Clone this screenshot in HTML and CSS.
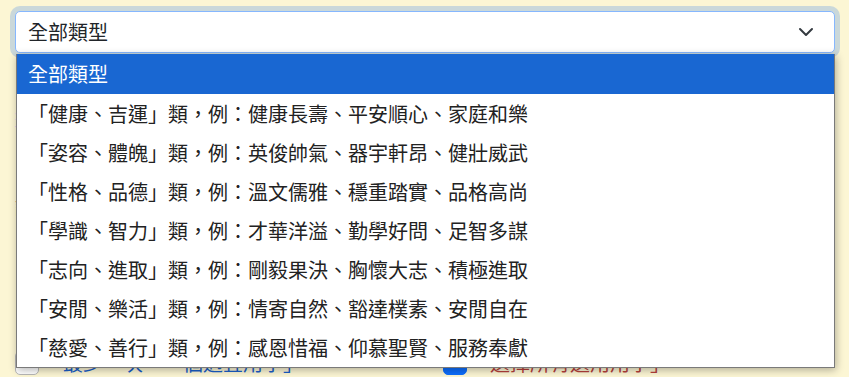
FILE: index.html
```html
<!DOCTYPE html>
<html lang="zh-Hant">
<head>
    <meta charset="UTF-8">
    <title>名字類型</title>
    <meta name="viewport" content="width=device-width, initial-scale=1.0">
    <link rel="stylesheet" href="styles.css">
</head>
<body>

    <div class="page">
        <div class="type-select">
            <div class="select-box">
                <span class="select-value">全部類型</span>
                <svg class="select-arrow" width="16" height="16" viewBox="0 0 16 16">
                    <path d="M2 5l6 6 6-6" fill="none" stroke="#343a40" stroke-width="2" stroke-linecap="round" stroke-linejoin="round"/>
                </svg>
            </div>

            <ul class="option-list">
                <li class="option selected">全部類型</li>
                <li class="option">「健康、吉運」類，例：健康長壽、平安順心、家庭和樂</li>
                <li class="option">「姿容、體魄」類，例：英俊帥氣、器宇軒昂、健壯威武</li>
                <li class="option">「性格、品德」類，例：溫文儒雅、穩重踏實、品格高尚</li>
                <li class="option">「學識、智力」類，例：才華洋溢、勤學好問、足智多謀</li>
                <li class="option">「志向、進取」類，例：剛毅果決、胸懷大志、積極進取</li>
                <li class="option">「安閒、樂活」類，例：情寄自然、豁達樸素、安閒自在</li>
                <li class="option">「慈愛、善行」類，例：感恩惜福、仰慕聖賢、服務奉獻</li>
            </ul>
        </div>

        <div class="filters">
            <p class="filter-link">選擇字數</p>
            <p class="filter-note">請選擇名字的字數及用字條件</p>
        </div>

        <div class="check-row">
            <label class="check-item">
                <span class="check-box"></span>
                <span class="check-text blue">最少一次「一個適宜用字」</span>
            </label>
            <label class="check-item">
                <span class="check-box checked"></span>
                <span class="check-text red">選擇所有選用用字」</span>
            </label>
        </div>
    </div>

</body>
</html>
```

FILE: styles.css
```css
html, body {
    height: 100%;
}

body {
    background-color: #fcf6d4;
    color: #212529;
    font-family: "Noto Sans CJK TC", "Noto Sans", sans-serif;
    margin: 0;
    padding: 0;
}

.page {
    display: flex;
    flex-direction: column;
    height: 377px;
    box-sizing: border-box;
    padding: 11px 14px 0 15px;
    overflow: hidden;
}

.type-select {
    position: relative;
    z-index: 10;
}

.select-box {
    display: flex;
    align-items: center;
    justify-content: space-between;
    height: 40px;
    padding: 0 20px 0 12px;
    background-color: #ffffff;
    border: 1px solid #86b7fe;
    border-radius: 5px;
    box-shadow: 0 0 0 5px rgba(110, 160, 230, 0.35);
    font-size: 20px;
    line-height: 1;
}

.select-value {
    color: #212529;
}

.select-arrow {
    display: block;
}

.option-list {
    position: absolute;
    top: 43px;
    left: 1px;
    right: 0;
    margin: 0;
    padding: 0;
    list-style: none;
    background-color: #ffffff;
    border: 1px solid #7a7a7a;
    border-top: none;
    box-shadow: 1px 2px 8px rgba(0, 0, 0, 0.3);
}

.option {
    height: 39px;
    line-height: 39px;
    padding-left: 11px;
    font-size: 20px;
    color: #222222;
    white-space: nowrap;
}

.option.selected {
    height: 40px;
    line-height: 40px;
    background-color: #1967d2;
    color: #ffffff;
}

.filters {
    padding-top: 50px;
}

.filter-link {
    margin: 0 0 60px;
    font-size: 20px;
    color: #0d6efd;
}

.filter-note {
    margin: 0;
    font-size: 20px;
    color: #333333;
}

.check-row {
    display: flex;
    align-items: center;
    height: 30px;
    margin-top: auto;
    margin-bottom: -1px;
    flex-shrink: 0;
}

.check-item {
    display: flex;
    align-items: center;
    width: 428px;
}

.check-item + .check-item {
    width: auto;
}

.check-box {
    width: 22px;
    height: 22px;
    border: 1px solid #b8b8b8;
    border-radius: 5px;
    background-color: #ffffff;
    margin-right: 24px;
}

.check-box.checked {
    background-color: #0d6efd;
    border-color: #0d6efd;
    margin-right: 23px;
}

.check-text {
    font-size: 20px;
    line-height: 30px;
}

.check-text.blue {
    color: #1a5fc8;
}

.check-text.red {
    color: #b5403a;
}
```
